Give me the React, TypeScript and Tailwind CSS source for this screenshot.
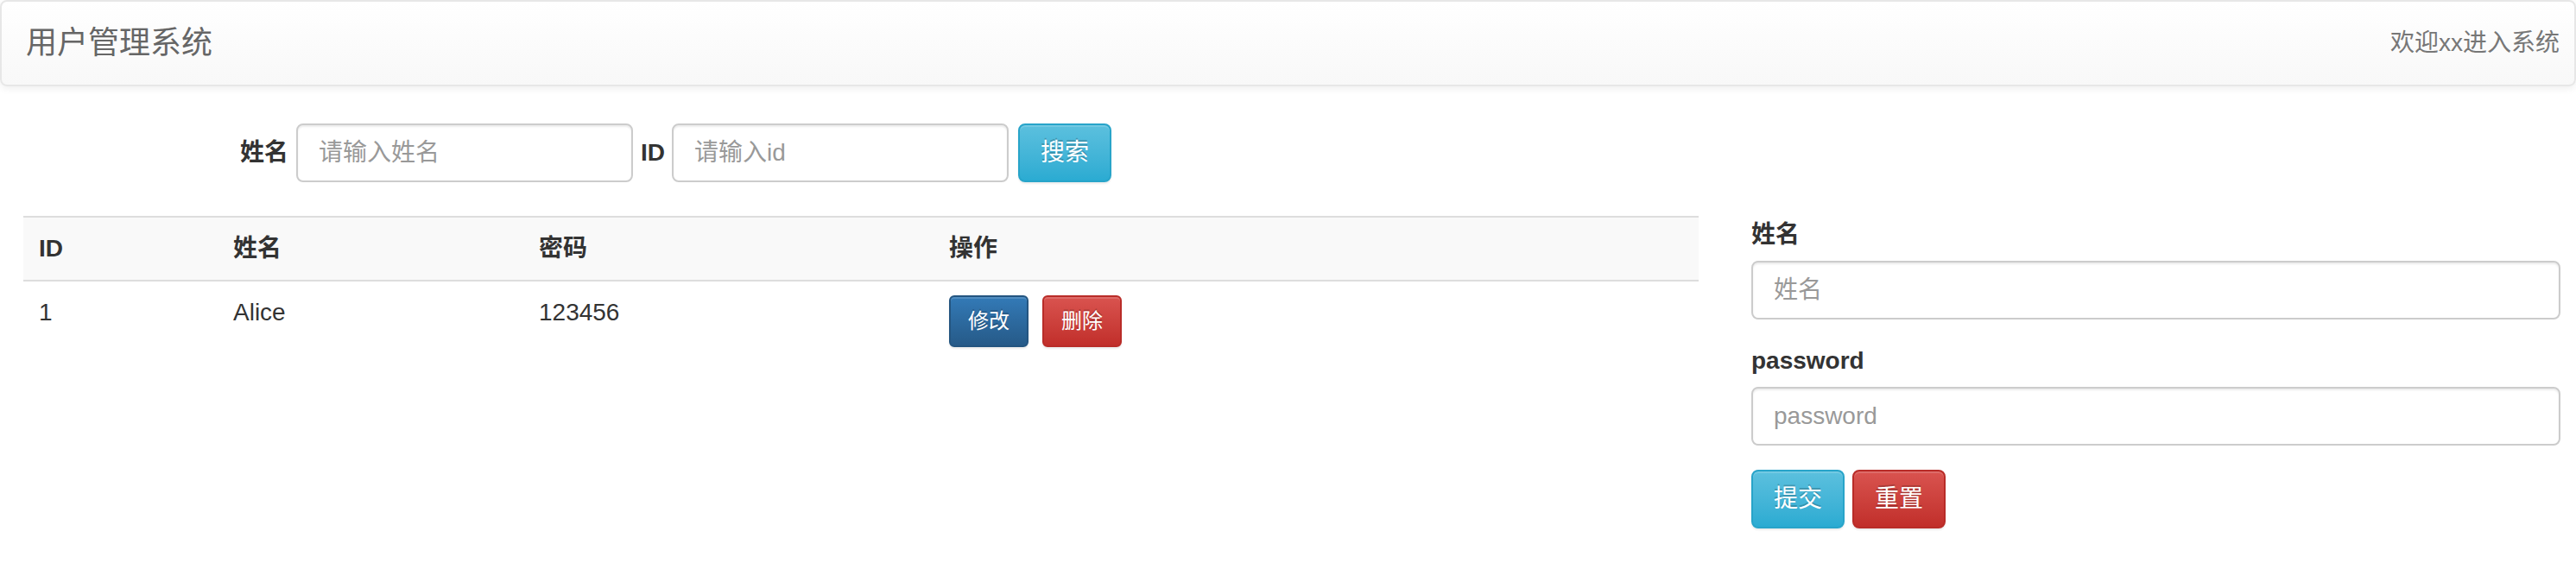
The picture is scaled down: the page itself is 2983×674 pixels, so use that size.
import React from "react";

const font = {
  fontFamily: '"Liberation Sans", Arial, "Noto Sans CJK SC", sans-serif',
};

function Btn({ kind, small, children }: { kind: "primary" | "danger" | "info"; small?: boolean; children: React.ReactNode }) {
  const colors =
    kind === "primary"
      ? "bg-gradient-to-b from-[#337ab7] to-[#265a88] border-[#245580]"
      : kind === "danger"
      ? "bg-gradient-to-b from-[#d9534f] to-[#c12e2a] border-[#b92c28]"
      : "bg-gradient-to-b from-[#5bc0de] to-[#2aabd2] border-[#28a4c9]";
  const size = small
    ? "h-[60px] px-[20px] text-[24px] rounded-[6px]"
    : "h-[68px] px-[24px] text-[28px] rounded-[8px]";
  return (
    <button
      className={`${colors} ${size} border-2 text-white leading-none flex items-center justify-center shadow-[inset_0_2px_0_rgba(255,255,255,0.15),0_2px_2px_rgba(0,0,0,0.075)] [text-shadow:0_-2px_0_rgba(0,0,0,0.2)]`}
    >
      {children}
    </button>
  );
}

function Input({ placeholder, className }: { placeholder: string; className?: string }) {
  return (
    <input
      placeholder={placeholder}
      className={`h-[68px] border-2 border-[#ccc] rounded-[8px] px-[24px] text-[28px] text-[#555] placeholder:text-[#999] shadow-[inset_0_2px_2px_rgba(0,0,0,0.075)] outline-none bg-white ${className ?? ""}`}
    />
  );
}

export default function App() {
  return (
    <div style={font} className="w-[2983px] min-h-[674px] bg-white text-[#333]">
      <nav className="h-[100px] border-2 border-[#e7e7e7] rounded-[8px] bg-gradient-to-b from-white to-[#f8f8f8] shadow-[inset_0_2px_0_rgba(255,255,255,0.15),0_2px_10px_rgba(0,0,0,0.075)] flex items-center justify-between pl-[28px] pr-[17px]">
        <span className="text-[36px] leading-[40px] text-[#666] [text-shadow:0_2px_0_rgba(255,255,255,0.25)]">用户管理系统</span>
        <span className="text-[28px] leading-[40px] text-[#777]">欢迎xx进入系统</span>
      </nav>

      <div className="flex pl-[27px] pr-[18px] pt-[43px]">
        <div className="w-[1940px] shrink-0">
          <div className="flex items-center ml-[251px] h-[68px]">
            <label className="text-[28px] font-bold mr-[9px]">姓名</label>
            <Input placeholder="请输入姓名" className="w-[390px]" />
            <label className="text-[28px] font-bold ml-[9px] mr-[8px]">ID</label>
            <Input placeholder="请输入id" className="w-[390px]" />
            <div className="ml-[11px]">
              <Btn kind="info">搜索</Btn>
            </div>
          </div>

          <table className="w-full mt-[39px] border-collapse text-[28px] leading-[40px]">
            <thead>
              <tr className="bg-[#f9f9f9]">
                <th className="w-[225px] text-left font-bold px-[18px] py-[16px] border-t-2 border-b-2 border-[#ddd]">ID</th>
                <th className="w-[354px] text-left font-bold px-[18px] py-[16px] border-t-2 border-b-2 border-[#ddd]">姓名</th>
                <th className="w-[475px] text-left font-bold px-[18px] py-[16px] border-t-2 border-b-2 border-[#ddd]">密码</th>
                <th className="text-left font-bold px-[18px] py-[16px] border-t-2 border-b-2 border-[#ddd]">操作</th>
              </tr>
            </thead>
            <tbody>
              <tr>
                <td className="px-[18px] py-[16px] align-top">1</td>
                <td className="px-[18px] py-[16px] align-top">Alice</td>
                <td className="px-[18px] py-[16px] align-top">123456</td>
                <td className="px-[18px] py-[16px] align-top">
                  <div className="flex gap-[16px]">
                    <Btn kind="primary" small>修改</Btn>
                    <Btn kind="danger" small>删除</Btn>
                  </div>
                </td>
              </tr>
            </tbody>
          </table>
        </div>

        <div className="flex-1 ml-[61px] pt-[109px]">
          <div>
            <label className="block text-[28px] leading-[40px] font-bold mb-[10px]">姓名</label>
            <Input placeholder="姓名" className="w-full" />
          </div>
          <div className="mt-[28px]">
            <label className="block text-[28px] leading-[40px] font-bold mb-[10px]">password</label>
            <Input placeholder="password" className="w-full" />
          </div>
          <div className="flex gap-[9px] mt-[28px]">
            <Btn kind="info">提交</Btn>
            <Btn kind="danger">重置</Btn>
          </div>
        </div>
      </div>
    </div>
  );
}
